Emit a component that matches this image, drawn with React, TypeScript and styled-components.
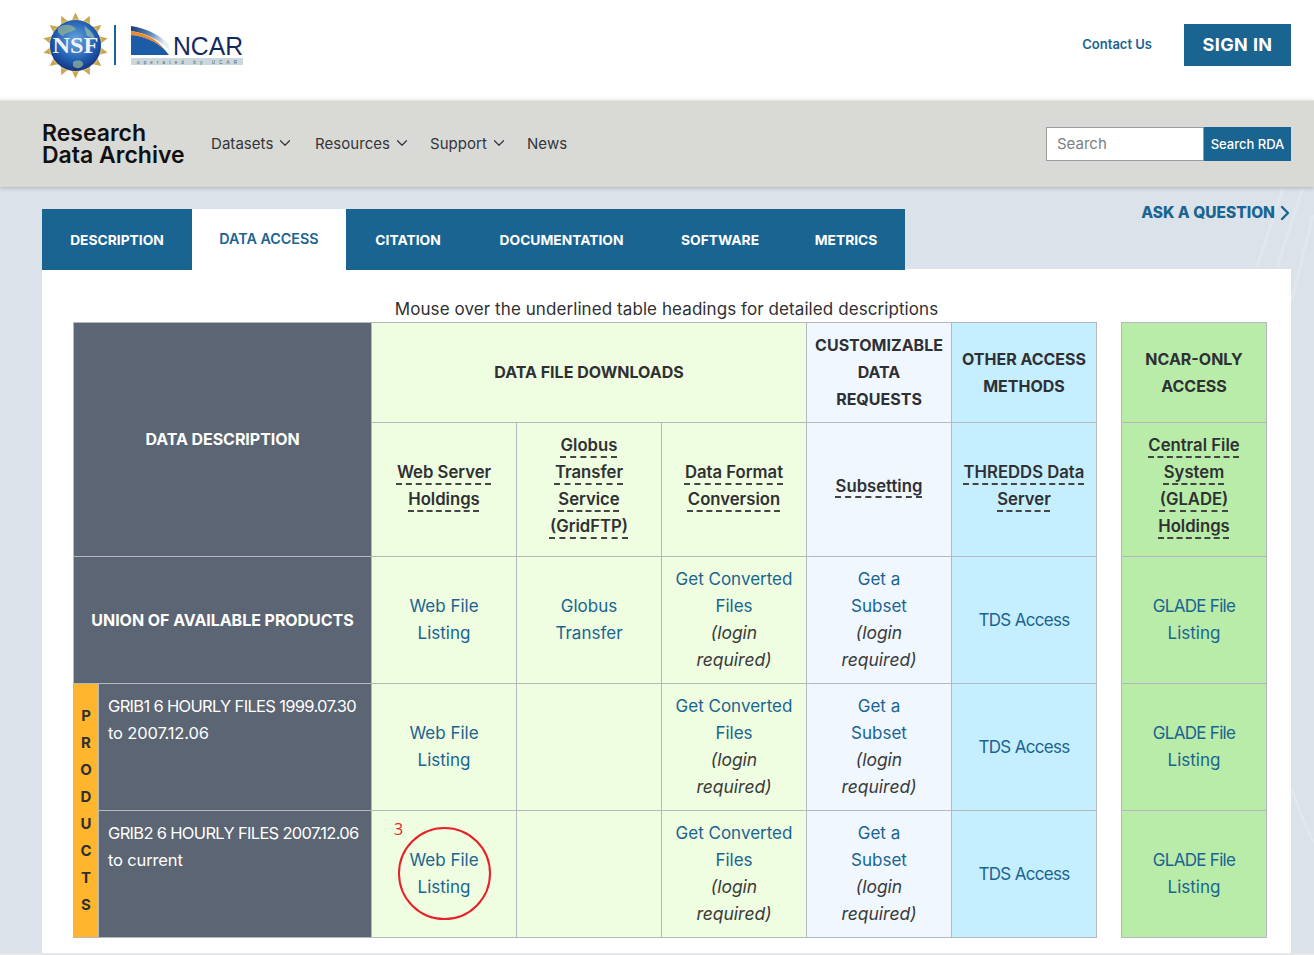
import * as React from 'react'
import styled, { createGlobalStyle } from 'styled-components'
import { ChevronDown, ChevronRight } from 'lucide-react'

const BLUE = '#1a6491'
const INK = '#2f3033'
const SLATE = '#5c6573'
const LINE = '#b6b9bb'
const TONES = { green: '#effde0', pale: '#f0f7ff', sky: '#c5eeff', ncar: '#b8eca8' }
type Tone = keyof typeof TONES

const GlobalStyle = createGlobalStyle`
  html, body { margin: 0; padding: 0; background: #fff; }
  body { font-family: Inter, "Open Sans", sans-serif; color: ${INK}; }
  #root { height: 955px; overflow: hidden; }
`

const TopBar = styled.header`
  height: 100px;
  box-sizing: border-box;
  background: #fff;
  display: flex;
  align-items: center;
  padding: 0 23px 10px 42px;
`
const Logos = styled.div`
  display: flex;
  align-items: center;
  flex: 1;
  height: 100%;
`
const Divider = styled.div`
  width: 2px;
  height: 40px;
  background: ${BLUE};
  margin: 0 15px 0 5px;
`
const ContactLink = styled.a`
  color: ${BLUE};
  font-size: 13px;
  font-weight: 600;
  margin: 0 32px 2px 0;
`
const SignIn = styled.button`
  width: 107px;
  height: 42px;
  border: 0;
  padding: 0 0 2px;
  background: ${BLUE};
  color: #fff;
  font: 700 18px Inter, sans-serif;
  letter-spacing: 0.4px;
`

const NavBand = styled.nav`
  height: 87px;
  box-sizing: border-box;
  background: #d9dad5;
  border-top: 1px solid #e4e5e3;
  box-shadow: 0 1px 4px rgba(60, 70, 80, 0.3);
  display: flex;
  align-items: center;
  padding: 0 23px 0 42px;
  position: relative;
  z-index: 2;
`
const Brand = styled.div`
  font-size: 23px;
  font-weight: 600;
  line-height: 22px;
  color: #101010;
  width: 169px;
  white-space: nowrap;
`
const NavLinks = styled.div`
  flex: 1;
  display: flex;
  align-items: center;
  font-size: 15px;
  color: #33353a;
  padding-bottom: 2px;
`
const NavItem = styled.span<{ $width: number }>`
  width: ${p => p.$width}px;
  display: flex;
  align-items: center;
  gap: 3px;
  letter-spacing: 0.05px;
`
const SearchBox = styled.div`
  display: flex;
  height: 34px;
`
const SearchField = styled.input`
  width: 158px;
  box-sizing: border-box;
  border: 1px solid #9b9b9b;
  padding: 0 10px 2px;
  font: 15px Inter, sans-serif;
  &::placeholder { color: #7b8087; opacity: 1; }
`
const SearchButton = styled.button`
  width: 87px;
  border: 0;
  padding: 0;
  background: ${BLUE};
  color: #fff;
  font: 500 13px Inter, sans-serif;
`

const Main = styled.main`
  position: relative;
  background: #dbe2ea;
  padding: 15px 23px 0 42px;
  overflow: hidden;
`
const Streaks = styled.svg`
  position: absolute;
  right: 0;
  top: 0;
`
const TabRow = styled.div`
  display: flex;
  justify-content: space-between;
  position: relative;
`
const Tabs = styled.div`
  display: flex;
  margin-top: 7px;
  position: relative;
  z-index: 1;
  height: 61px;
`
const Tab = styled.div<{ $width: number; $active?: boolean }>`
  width: ${p => p.$width}px;
  background: ${p => (p.$active ? '#fff' : BLUE)};
  color: ${p => (p.$active ? BLUE : '#fff')};
  display: flex;
  align-items: center;
  justify-content: center;
  font-size: ${p => (p.$active ? '14.3px' : '13.8px')};
  font-weight: ${p => (p.$active ? 600 : 700)};
  padding-bottom: ${p => (p.$active ? '3px' : '0')};
  box-sizing: border-box;
`
const AskLink = styled.a`
  display: flex;
  align-items: center;
  color: ${BLUE};
  font-size: 15.5px;
  font-weight: 800;
  line-height: 20px;
  height: 20px;
  margin-top: 1px;
`
const AskChevron = styled(ChevronRight)`
  margin: 0 -6px 0 -2px;
`
const Panel = styled.section`
  position: relative;
  margin-top: -1px;
  background: #fff;
  padding: 27px 24px 15px 31px;
`
const Caption = styled.div`
  text-align: center;
  font-size: 17px;
  line-height: 26px;
  padding-right: 7px;
  letter-spacing: 0.08px;
`
const Tables = styled.div`
  display: flex;
  gap: 24px;
`
const Grid = styled.table<{ $width: number }>`
  width: ${p => p.$width}px;
  border-collapse: collapse;
  table-layout: fixed;
  font-size: 17px;
  line-height: 27px;
`
const Col = styled.col<{ $width: number }>`
  width: ${p => p.$width}px;
`
const Row = styled.tr<{ $height: number }>`
  height: ${p => p.$height}px;
`
const Cell = styled.td<{ $tone: Tone }>`
  position: relative;
  background: ${p => TONES[p.$tone]};
  border: 1px solid ${LINE};
  text-align: center;
  vertical-align: middle;
  padding: 0;
  white-space: nowrap;
`
const GroupHead = styled(Cell).attrs({ as: 'th' })`
  font-weight: 700;
  font-size: 16px;
  color: ${INK};
`
const SubHead = styled(Cell).attrs({ as: 'th' })`
  font-weight: 600;
  font-size: 16.7px;
  color: ${INK};
  padding: 0 0 7px;
`
const Dashed = styled.span`
  text-decoration: underline dashed 2px #444;
  text-underline-offset: 5px;
`
const SlateHead = styled.th`
  background: ${SLATE};
  border: 1px solid ${LINE};
  color: #fff;
  font-size: 16px;
  font-weight: 700;
  letter-spacing: -0.05px;
  padding: 0;
  white-space: nowrap;
`
const SideLabel = styled.td`
  background: #ffb52e;
  border: 1px solid ${LINE};
  padding: 0 0 2px;
  text-align: center;
  font-size: 15px;
  font-weight: 700;
  color: ${INK};
`
const SideLetter = styled.div`
  line-height: 27px;
`
const ProductCell = styled.td`
  background: ${SLATE};
  border: 1px solid ${LINE};
  color: #fff;
  vertical-align: top;
  padding: 9px 0 0 9px;
  font-size: 16.5px;
  letter-spacing: -0.15px;
  white-space: nowrap;
`
const ProductTitle = styled.span`
  letter-spacing: -0.68px;
`
const Link = styled.a`
  color: ${BLUE};
`
const CapsLink = styled(Link)`
  letter-spacing: -0.7px;
`
const Note = styled.i`
  color: #3a3a3a;
  font-size: 17.5px;
  line-height: 0;
`
const RedCircle = styled.div`
  position: absolute;
  left: 26px;
  top: 16px;
  width: 93px;
  height: 93px;
  box-sizing: border-box;
  border: 2px solid #e8202a;
  border-radius: 50%;
`
const RedNumber = styled.span`
  position: absolute;
  left: 22px;
  top: 8px;
  color: #e8202a;
  font: 16px/20px "Open Sans", sans-serif;
`
const Footer = styled.footer`
  border-top: 3px solid #e6e7e8;
  background: #fff;
  height: 10px;
`

function Lines({ items }: { items: string[] }) {
  return (
    <>
      {items.map((l, i) => (
        <React.Fragment key={l}>
          {i > 0 && <br />}
          {l}
        </React.Fragment>
      ))}
    </>
  )
}

function DashedLines({ items }: { items: string[] }) {
  return (
    <>
      {items.map((l, i) => (
        <React.Fragment key={l}>
          {i > 0 && <br />}
          <Dashed>{l}</Dashed>
        </React.Fragment>
      ))}
    </>
  )
}

function NsfLogo() {
  const rays = Array.from({ length: 14 }, (_, i) => (i * 360) / 14)
  return (
    <svg width="67" height="67" viewBox="0 0 67 67">
      <defs>
        <radialGradient id="globe" cx="0.5" cy="0.4" r="0.62">
          <stop offset="0" stopColor="#6aa9e0" />
          <stop offset="0.65" stopColor="#1f5cb0" />
          <stop offset="1" stopColor="#142f7c" />
        </radialGradient>
      </defs>
      {rays.map(a => (
        <g key={a} transform={`rotate(${a} 33.5 33.5)`}>
          <path d="M29.5 9 L33.5 0.5 L37.5 9 Z" fill="#c7a64f" />
          <path d="M28 9 Q33.5 4 39 9 L37 13 L30 13 Z" fill="#d8bf76" />
        </g>
      ))}
      <circle cx="33.5" cy="33.5" r="25.5" fill="url(#globe)" />
      <path d="M16 16 C22 11 30 12 34 17 C30 21 25 19 21 24 C18 23 15 20 16 16 Z" fill="#8fb39a" opacity="0.75" />
      <path d="M31 50 C36 47 42 49 41 53 C39 57 34 57 31 54 Z" fill="#8fb39a" opacity="0.75" />
      <path d="M42 14 C47 17 52 22 53 27 L45 24 Z" fill="#a5c7ae" opacity="0.65" />
      <text x="33.5" y="41" textAnchor="middle" fontFamily='"Liberation Serif", serif' fontWeight="700" fontSize="24" fill="#eef2f8" textLength="46" lengthAdjust="spacingAndGlyphs">
        NSF
      </text>
    </svg>
  )
}

function NcarLogo() {
  return (
    <svg width="113" height="42" viewBox="0 0 113 42">
      <defs>
        <linearGradient id="swoosh" x1="0" x2="1" y1="0" y2="0.3">
          <stop offset="0" stopColor="#173a78" />
          <stop offset="0.55" stopColor="#5f86b4" />
          <stop offset="1" stopColor="#e4edf4" />
        </linearGradient>
      </defs>
      <path d="M0 2 C15 4 29 11 38 21 L38 26 C28 15 14 9 0 7 Z" fill="url(#swoosh)" />
      <path d="M0 7 C14 9 26 15 33 25 C24 17 12 12 0 11 Z" fill="#ef8a2a" />
      <path d="M0 11 C12 12 24 17 33 25 L38 31 L0 31 Z" fill="#1c5ba6" />
      <text x="42" y="31" fontFamily='"Liberation Sans", sans-serif' fontSize="25" fill="#14295e" textLength="70" lengthAdjust="spacingAndGlyphs">
        NCAR
      </text>
      <rect x="0" y="34" width="112" height="7" fill="#ccd7dc" />
      <text x="6" y="39.5" fontFamily='"Liberation Sans", sans-serif' fontSize="4.5" fill="#3d5a74" textLength="100">
        operated by UCAR
      </text>
    </svg>
  )
}

function ConvertedLink() {
  return (
    <>
      <Link>Get Converted<br />Files</Link>
      <br />
      <Note>(login<br />required)</Note>
    </>
  )
}

function SubsetLink() {
  return (
    <>
      <Link>Get a<br />Subset</Link>
      <br />
      <Note>(login<br />required)</Note>
    </>
  )
}

const PRODUCTS = [
  ['GRIB1 6 HOURLY FILES 1999.07.30', 'to 2007.12.06'],
  ['GRIB2 6 HOURLY FILES 2007.12.06', 'to current'],
]

const TABS = [
  { label: 'DESCRIPTION', width: 150 },
  { label: 'DATA ACCESS', width: 154, active: true },
  { label: 'CITATION', width: 124 },
  { label: 'DOCUMENTATION', width: 183 },
  { label: 'SOFTWARE', width: 134 },
  { label: 'METRICS', width: 118 },
]

export default function App() {
  return (
    <>
      <GlobalStyle />
      <TopBar>
        <Logos>
          <NsfLogo />
          <Divider />
          <NcarLogo />
        </Logos>
        <ContactLink>Contact Us</ContactLink>
        <SignIn>SIGN IN</SignIn>
      </TopBar>
      <NavBand>
        <Brand>Research<br />Data Archive</Brand>
        <NavLinks>
          <NavItem $width={104}>Datasets <ChevronDown size={18} strokeWidth={1.6} /></NavItem>
          <NavItem $width={115}>Resources <ChevronDown size={18} strokeWidth={1.6} /></NavItem>
          <NavItem $width={97}>Support <ChevronDown size={18} strokeWidth={1.6} /></NavItem>
          <NavItem $width={50}>News</NavItem>
        </NavLinks>
        <SearchBox>
          <SearchField placeholder="Search" />
          <SearchButton>Search RDA</SearchButton>
        </SearchBox>
      </NavBand>
      <Main>
        <Streaks width="90" height="700" viewBox="0 0 90 700">
          <path d="M59 1 L33 80" stroke="#e2e7ee" strokeWidth="3" fill="none" />
          <path d="M79 1 L53 80" stroke="#e2e7ee" strokeWidth="3" fill="none" />
          <path d="M89 28 L68 113" stroke="#e2e7ee" strokeWidth="3" fill="none" />
          <path d="M68 602 C74 620 82 640 90 656" stroke="#e2e7ee" strokeWidth="3" fill="none" />
        </Streaks>
        <TabRow>
          <Tabs>
            {TABS.map(t => (
              <Tab key={t.label} $width={t.width} $active={t.active}>{t.label}</Tab>
            ))}
          </Tabs>
          <AskLink>ASK A QUESTION <AskChevron size={24} strokeWidth={2.4} /></AskLink>
        </TabRow>
        <Panel>
          <Caption>Mouse over the underlined table headings for detailed descriptions</Caption>
          <Tables>
            <Grid $width={1023}>
              <colgroup>
                <Col $width={25} />
                <Col $width={273} />
                <Col $width={145} />
                <Col $width={145} />
                <Col $width={145} />
                <Col $width={145} />
                <Col $width={145} />
              </colgroup>
              <tbody>
                <Row $height={100}>
                  <SlateHead colSpan={2} rowSpan={2}>DATA DESCRIPTION</SlateHead>
                  <GroupHead $tone="green" colSpan={3}>DATA FILE DOWNLOADS</GroupHead>
                  <GroupHead $tone="pale"><Lines items={['CUSTOMIZABLE', 'DATA', 'REQUESTS']} /></GroupHead>
                  <GroupHead $tone="sky"><Lines items={['OTHER ACCESS', 'METHODS']} /></GroupHead>
                </Row>
                <Row $height={134}>
                  <SubHead $tone="green"><DashedLines items={['Web Server', 'Holdings']} /></SubHead>
                  <SubHead $tone="green"><DashedLines items={['Globus', 'Transfer', 'Service', '(GridFTP)']} /></SubHead>
                  <SubHead $tone="green"><DashedLines items={['Data Format', 'Conversion']} /></SubHead>
                  <SubHead $tone="pale"><DashedLines items={['Subsetting']} /></SubHead>
                  <SubHead $tone="sky"><DashedLines items={['THREDDS Data', 'Server']} /></SubHead>
                </Row>
                <Row $height={127}>
                  <SlateHead colSpan={2}>UNION OF AVAILABLE PRODUCTS</SlateHead>
                  <Cell $tone="green"><Link>Web File<br />Listing</Link></Cell>
                  <Cell $tone="green"><Link>Globus<br />Transfer</Link></Cell>
                  <Cell $tone="green"><ConvertedLink /></Cell>
                  <Cell $tone="pale"><SubsetLink /></Cell>
                  <Cell $tone="sky"><CapsLink>TDS Access</CapsLink></Cell>
                </Row>
                {PRODUCTS.map((p, i) => (
                  <Row $height={127} key={p[0]}>
                    {i === 0 && (
                      <SideLabel rowSpan={2}>
                        {'PRODUCTS'.split('').map((c, n) => <SideLetter key={n}>{c}</SideLetter>)}
                      </SideLabel>
                    )}
                    <ProductCell><ProductTitle>{p[0]}</ProductTitle><br />{p[1]}</ProductCell>
                    <Cell $tone="green">
                      <Link>Web File<br />Listing</Link>
                      {i === 1 && <RedCircle />}
                      {i === 1 && <RedNumber>3</RedNumber>}
                    </Cell>
                    <Cell $tone="green" />
                    <Cell $tone="green"><ConvertedLink /></Cell>
                    <Cell $tone="pale"><SubsetLink /></Cell>
                    <Cell $tone="sky"><CapsLink>TDS Access</CapsLink></Cell>
                  </Row>
                ))}
              </tbody>
            </Grid>
            <Grid $width={146}>
              <tbody>
                <Row $height={100}>
                  <GroupHead $tone="ncar"><Lines items={['NCAR-ONLY', 'ACCESS']} /></GroupHead>
                </Row>
                <Row $height={134}>
                  <SubHead $tone="ncar"><DashedLines items={['Central File', 'System', '(GLADE)', 'Holdings']} /></SubHead>
                </Row>
                {[0, 1, 2].map(i => (
                  <Row $height={127} key={i}>
                    <Cell $tone="ncar"><CapsLink>GLADE File</CapsLink><br /><Link>Listing</Link></Cell>
                  </Row>
                ))}
              </tbody>
            </Grid>
          </Tables>
        </Panel>
      </Main>
      <Footer />
    </>
  )
}
